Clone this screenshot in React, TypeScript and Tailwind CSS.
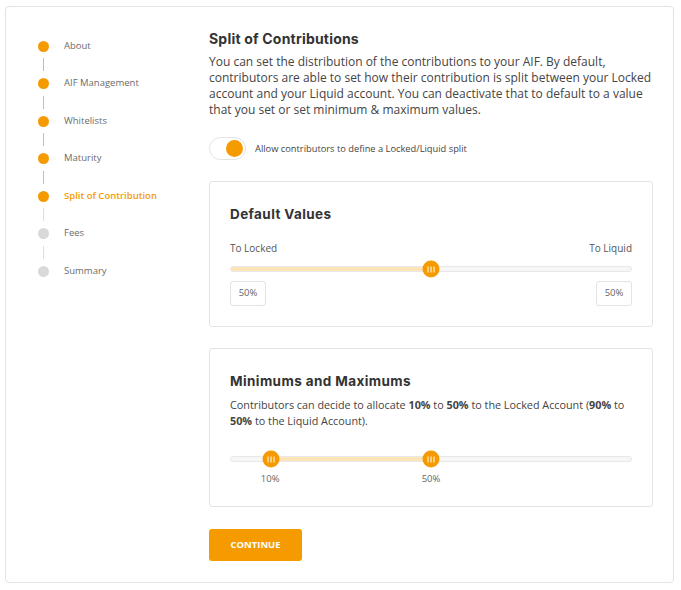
import React from 'react'

const steps = [
  { label: 'About', state: 'done' },
  { label: 'AIF Management', state: 'done' },
  { label: 'Whitelists', state: 'done' },
  { label: 'Maturity', state: 'done' },
  { label: 'Split of Contribution', state: 'active' },
  { label: 'Fees', state: 'todo' },
  { label: 'Summary', state: 'todo' },
]

function Thumb({ left }: { left: string }) {
  return (
    <div
      className="absolute top-1/2 -translate-x-1/2 -translate-y-1/2 w-[17px] h-[17px] rounded-full bg-[#f59b00] flex items-center justify-center gap-[1.5px]"
      style={{ left }}
    >
      <span className="w-[1.5px] h-[6px] bg-white" />
      <span className="w-[1.5px] h-[6px] bg-white" />
      <span className="w-[1.5px] h-[6px] bg-white" />
    </div>
  )
}

function Sidebar() {
  return (
    <div className="w-[203px] shrink-0 pl-[32px] pt-[27px]">
      {steps.map((s, i) => {
        const dot = s.state === 'todo' ? 'bg-[#d9d9d9]' : 'bg-[#f59b00]'
        const next = steps[i + 1]
        const line = next && next.state === 'todo' ? 'bg-[#dedede]' : 'bg-[#f5b84d]'
        return (
          <div key={s.label}>
            <div className="flex items-center h-[24px]">
              <div className={`w-[11px] h-[11px] rounded-full ${dot}`} />
              <span
                className={`ml-[15px] text-[9.5px] ${s.state === 'active' ? 'text-[#f59b00] font-semibold' : 'text-[#6b6b6b]'}`}
              >
                {s.label}
              </span>
            </div>
            {next && (
              <div className="h-[13.5px] flex items-center">
                <div className={`ml-[5px] w-px h-[13px] ${line}`} />
              </div>
            )}
          </div>
        )
      })}
    </div>
  )
}

const heading = { fontFamily: 'Inter, sans-serif' }

export default function App() {
  return (
    <div className="w-[681px] h-[590px] bg-white p-[5px] pt-[6px]" style={{ fontFamily: '"Open Sans", sans-serif' }}>
      <div className="w-[669px] h-[577px] border border-[#e3e3e3] rounded-[4px] flex">
        <Sidebar />
        <div className="w-[444px] pt-[22px]">
          <h1 className="text-[14px] font-bold text-[#333] leading-[20px] tracking-[0.2px]" style={heading}>
            Split of Contributions
          </h1>
          <p className="mt-[5px] text-[12px] leading-[16px] text-[#444]">
            You can set the distribution of the contributions to your AIF. By default, contributors are able to set how their contribution is split between your Locked account and your Liquid account. You can deactivate that to default to a value that you set or set minimum &amp; maximum values.
          </p>
          <div className="mt-[19px] flex items-center">
            <div className="w-[37px] h-[23px] rounded-full border border-[#e3e3e3] bg-white flex items-center justify-end pr-[2px]">
              <div className="w-[17px] h-[17px] rounded-full bg-[#f59b00]" />
            </div>
            <span className="ml-[9px] text-[9.3px] text-[#444]">Allow contributors to define a Locked/Liquid split</span>
          </div>

          <div className="mt-[21px] border border-[#e3e3e3] rounded-[3px] px-[20px] pt-[23px] h-[146px]">
            <h2 className="text-[13.5px] font-bold text-[#333] leading-[18px] tracking-[0.4px]" style={heading}>
              Default Values
            </h2>
            <div className="mt-[18px] flex justify-between text-[10px] text-[#555] leading-[14px]">
              <span>To Locked</span>
              <span>To Liquid</span>
            </div>
            <div className="mt-[11px] relative h-[6px] rounded-full border border-[#e8e8e8] bg-[#f7f7f7]">
              <div className="absolute left-0 top-0 bottom-0 w-1/2 rounded-full bg-[#fde3b8]" />
              <Thumb left="50%" />
            </div>
            <div className="mt-[9px] flex justify-between">
              <div className="w-[36px] h-[25px] border border-[#e3e3e3] rounded-[3px] flex items-center justify-center text-[9.5px] text-[#666]">50%</div>
              <div className="w-[36px] h-[25px] border border-[#e3e3e3] rounded-[3px] flex items-center justify-center text-[9.5px] text-[#666]">50%</div>
            </div>
          </div>

          <div className="mt-[21px] border border-[#e3e3e3] rounded-[3px] px-[20px] pt-[23px] h-[159px]">
            <h2 className="text-[13.5px] font-bold text-[#333] leading-[18px] tracking-[0.4px]" style={heading}>
              Minimums and Maximums
            </h2>
            <p className="mt-[7px] text-[10.8px] leading-[16px] text-[#444]">
              Contributors can decide to allocate <b>10%</b> to <b>50%</b> to the Locked Account (<b>90%</b> to <b>50%</b> to the Liquid Account).
            </p>
            <div className="mt-[27px] relative h-[6px] rounded-full border border-[#e8e8e8] bg-[#f7f7f7]">
              <div className="absolute top-0 bottom-0 left-[10%] w-[40%] bg-[#fde3b8]" />
              <Thumb left="10%" />
              <Thumb left="50%" />
            </div>
            <div className="relative h-[20px] mt-[10px] text-[9.5px] text-[#666]">
              <span className="absolute -translate-x-1/2 left-[10%]">10%</span>
              <span className="absolute -translate-x-1/2 left-[50%]">50%</span>
            </div>
          </div>

          <button className="mt-[22px] w-[93px] h-[32px] rounded-[3px] bg-[#f59b00] text-white text-[9.5px] font-bold">
            CONTINUE
          </button>
        </div>
      </div>
    </div>
  )
}
